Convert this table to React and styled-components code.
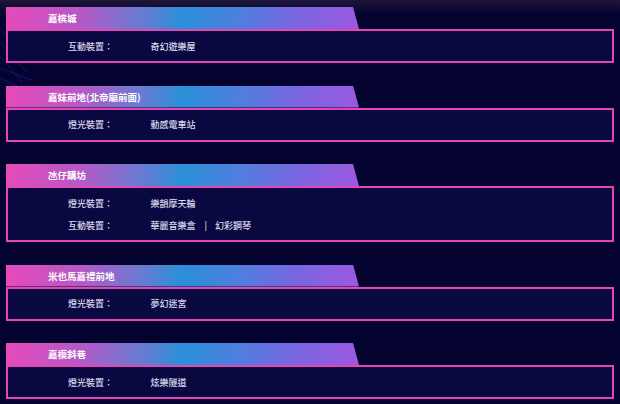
import React from "react";
import styled, { createGlobalStyle } from "styled-components";

const Global = createGlobalStyle`
  html, body { margin: 0; padding: 0; }
  body {
    background: #04022f;
    font-family: "Noto Sans CJK TC", "Noto Sans", "Liberation Sans", sans-serif;
  }
`;

const Page = styled.div`
  position: relative;
  width: 620px;
  height: 404px;
  overflow: hidden;
  background: linear-gradient(180deg, #1f1638 0px, #0c0834 10px, #04022f 16px, #04022f 100%);
`;

const Decor = styled.svg`
  position: absolute;
  left: 0;
  top: 0;
  pointer-events: none;
`;

const List = styled.div`
  position: relative;
  display: flex;
  flex-direction: column;
  gap: 22.5px;
  padding: 7px 6px 0 6px;
`;

const Card = styled.section`
  display: flex;
  flex-direction: column;
`;

const Tab = styled.div`
  width: 353px;
  height: 22px;
  box-sizing: border-box;
  padding-left: 42px;
  display: flex;
  align-items: center;
  clip-path: polygon(0 0, 347px 0, 353px 100%, 0 100%);
  background: linear-gradient(100deg, #e84ab9 0%, #b25ac6 22%, #6a7ad2 38%, #2a90d8 50%, #4f7ede 66%, #7a66e0 82%, #9c58e0 100%);
  color: #ffffff;
  font-size: 9.5px;
  font-weight: 700;
`;

const Box = styled.div`
  border: 2px solid #e545b5;
  background: #0a0840;
  padding: 4px 0 4px 60px;
  display: flex;
  flex-direction: column;
`;

const Row = styled.div`
  display: flex;
  align-items: center;
  height: 22px;
  font-size: 9px;
  font-weight: 500;
  color: #dcdaee;
`;

const Label = styled.span`
  width: 82.5px;
  flex: none;
`;

const Value = styled.span`
  display: flex;
  align-items: center;
`;

const Sep = styled.span`
  margin: 0 8px 0 9px;
`;

const data = [
  { title: "嘉槟城", rows: [["互動裝置：", ["奇幻遊樂屋"]]] },
  { title: "嘉妹前地(北帝廟前面)", rows: [["燈光裝置：", ["動感電車站"]]] },
  {
    title: "氹仔購坊",
    rows: [
      ["燈光裝置：", ["樂韻摩天輪"]],
      ["互動裝置：", ["華麗音樂盒", "幻彩鋼琴"]],
    ],
  },
  { title: "米也馬嘉禮前地", rows: [["燈光裝置：", ["夢幻迷宮"]]] },
  { title: "嘉模斜巷", rows: [["燈光裝置：", ["炫樂隧道"]]] },
];

export default function App() {
  return (
    <Page>
      <Global />
      <Decor width="40" height="110" viewBox="0 0 40 110">
        <g stroke="#1a28a0" strokeWidth="1" opacity="0.55" fill="none">
          <line x1="0" y1="28" x2="30" y2="62" />
          <line x1="0" y1="42" x2="26" y2="72" />
          <line x1="0" y1="56" x2="22" y2="82" />
          <line x1="0" y1="68" x2="32" y2="80" />
          <line x1="0" y1="78" x2="26" y2="90" />
        </g>
      </Decor>
      <List>
        {data.map((c) => (
          <Card key={c.title}>
            <Tab>{c.title}</Tab>
            <Box>
              {c.rows.map(([label, vals]) => (
                <Row key={label + vals[0]}>
                  <Label>{label}</Label>
                  <Value>
                    {vals.map((v, i) => (
                      <React.Fragment key={v}>
                        {i > 0 && <Sep>|</Sep>}
                        {v}
                      </React.Fragment>
                    ))}
                  </Value>
                </Row>
              ))}
            </Box>
          </Card>
        ))}
      </List>
    </Page>
  );
}
